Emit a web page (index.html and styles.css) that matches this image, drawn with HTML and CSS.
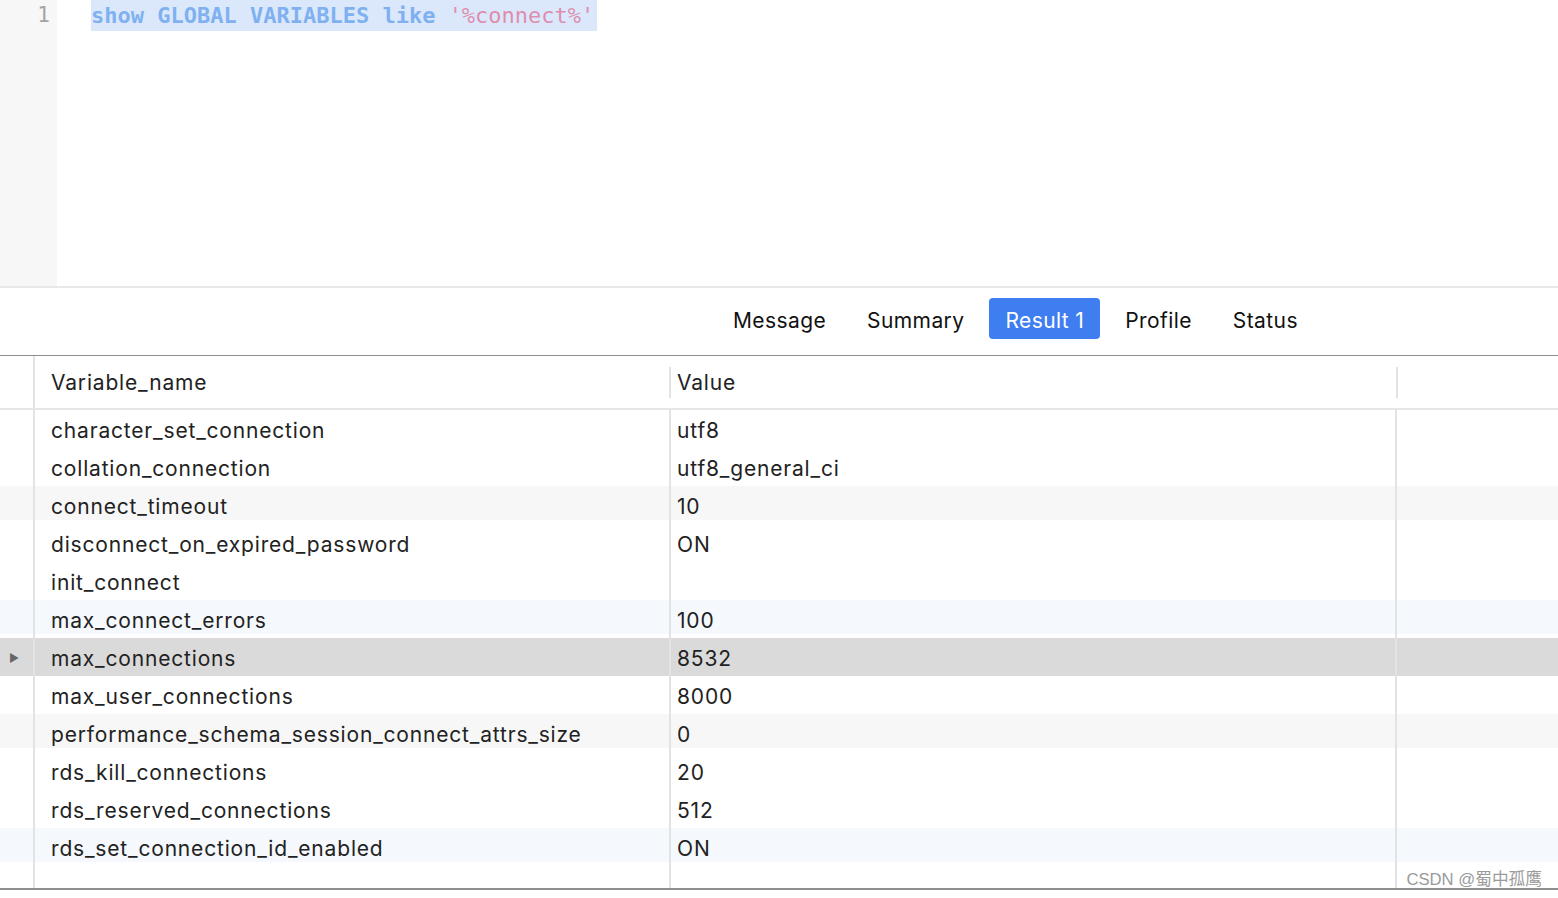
FILE: index.html
```html
<!DOCTYPE html>
<html>
<head>
<meta charset="utf-8">
<link rel="stylesheet" href="styles.css">
</head>
<body>
<div class="app">
  <section class="editor">
    <div class="gutter"><span class="ln">1</span></div>
    <div class="code"><span class="sel"><span class="kw">show GLOBAL VARIABLES like</span> <span class="str">'%connect%'</span></span></div>
  </section>
  <nav class="tabs">
    <span class="tab">Message</span>
    <span class="tab">Summary</span>
    <span class="tab active">Result 1</span>
    <span class="tab">Profile</span>
    <span class="tab">Status</span>
  </nav>
  <div class="grid">
    <div class="row head">
      <div class="c g"></div>
      <div class="c n">Variable_name</div>
      <div class="c v"><span class="hl">Value</span></div>
      <div class="c x"><span class="hl"></span></div>
    </div>
    <div class="row"><div class="c g"></div><div class="c n">character_set_connection</div><div class="c v">utf8</div><div class="c x"></div></div>
    <div class="row"><div class="c g"></div><div class="c n">collation_connection</div><div class="c v">utf8_general_ci</div><div class="c x"></div></div>
    <div class="row grey"><div class="c g"></div><div class="c n">connect_timeout</div><div class="c v">10</div><div class="c x"></div></div>
    <div class="row"><div class="c g"></div><div class="c n">disconnect_on_expired_password</div><div class="c v">ON</div><div class="c x"></div></div>
    <div class="row"><div class="c g"></div><div class="c n">init_connect</div><div class="c v"></div><div class="c x"></div></div>
    <div class="row blue"><div class="c g"></div><div class="c n">max_connect_errors</div><div class="c v">100</div><div class="c x"></div></div>
    <div class="row selected"><div class="c g"><span class="tri">&#9658;</span></div><div class="c n">max_connections</div><div class="c v">8532</div><div class="c x"></div></div>
    <div class="row"><div class="c g"></div><div class="c n">max_user_connections</div><div class="c v">8000</div><div class="c x"></div></div>
    <div class="row grey"><div class="c g"></div><div class="c n">performance_schema_session_connect_attrs_size</div><div class="c v">0</div><div class="c x"></div></div>
    <div class="row"><div class="c g"></div><div class="c n">rds_kill_connections</div><div class="c v">20</div><div class="c x"></div></div>
    <div class="row"><div class="c g"></div><div class="c n">rds_reserved_connections</div><div class="c v">512</div><div class="c x"></div></div>
    <div class="row blue"><div class="c g"></div><div class="c n">rds_set_connection_id_enabled</div><div class="c v">ON</div><div class="c x"></div></div>
    <div class="row filler"><div class="c g"></div><div class="c n"></div><div class="c v"></div><div class="c x"></div></div>
  </div>
  <div class="foot"></div>
  <div class="mark">CSDN @蜀中孤鹰</div>
</div>
</body>
</html>
```
FILE: styles.css
```css
* { box-sizing: border-box; }
html, body { margin: 0; padding: 0; background: #fff; }
body { font-family: Inter, "Liberation Sans", "Noto Sans CJK SC", sans-serif; color: #222; }
.app { position: relative; width: 1558px; height: 898px; overflow: hidden; }

.editor { display: flex; height: 288px; border-bottom: 2px solid #e8e8e8; }
.gutter { width: 57px; background: #f7f7f7; text-align: right; padding-right: 7px; }
.ln { font-family: "DejaVu Sans Mono", monospace; font-size: 21px; color: #a3a3a3; line-height: 30px; display: block; }
.code { padding-left: 34px; font-family: "DejaVu Sans Mono", monospace; font-size: 22px; line-height: 31px; }
.sel { background: #dbe8fb; display: inline-block; padding-right: 3px; }
.kw { color: #7fb1f1; font-weight: bold; }
.str { color: #de8fae; }

.tabs { display: flex; align-items: flex-start; height: 68px; border-bottom: 1px solid #8c8c8c; padding-left: 717px; padding-top: 10px; gap: 9px; }
.tab { font-size: 21px; letter-spacing: 0.4px; color: #111; padding: 0 16px; height: 41px; line-height: 45px; border-radius: 4px; }
.tab.active { background: #3f7ef0; color: #fff; }

.grid { display: flex; flex-direction: column; }
.row { display: grid; grid-template-columns: 35px 636px 726px 1fr; height: 38px; font-size: 21px; letter-spacing: 0.82px; color: #222; }
.row .c { display: flex; align-items: center; white-space: nowrap; padding-top: 2px; }
.c.g { border-right: 2px solid #e3e3e3; justify-content: center; }
.row .n { padding-left: 16px; border-right: 2px solid #e3e3e3; }
.row .v { padding-left: 6px; border-right: 2px solid #e3e3e3; }
.row.head { height: 54px; border-bottom: 2px solid #e6e6e6; grid-template-columns: 35px 634px 727px 1fr; }
.row.head .c { padding-top: 1px; }
.row.head .n, .row.head .v { border-right: none; }
.row.head .v, .row.head .x { padding-left: 0; }
.hl { display: flex; align-items: center; height: 31px; border-left: 2px solid #e3e3e3; padding-left: 6px; }
.row.grey { background: linear-gradient(#f7f7f7 34px, transparent 34px); }
.row.blue { background: linear-gradient(#f5f8fd 34px, transparent 34px); }
.row.selected { background: #dadada; }
.tri { font-size: 11px; color: #666; margin-left: -4px; }
.row.filler { height: 22px; }

.foot { height: 2px; background: #8f8f8f; }
.mark { position: absolute; right: 16px; bottom: 8px; font-size: 16.7px; color: #9a9a9a; font-family: "Liberation Sans", "Noto Sans CJK SC", sans-serif; }
```
